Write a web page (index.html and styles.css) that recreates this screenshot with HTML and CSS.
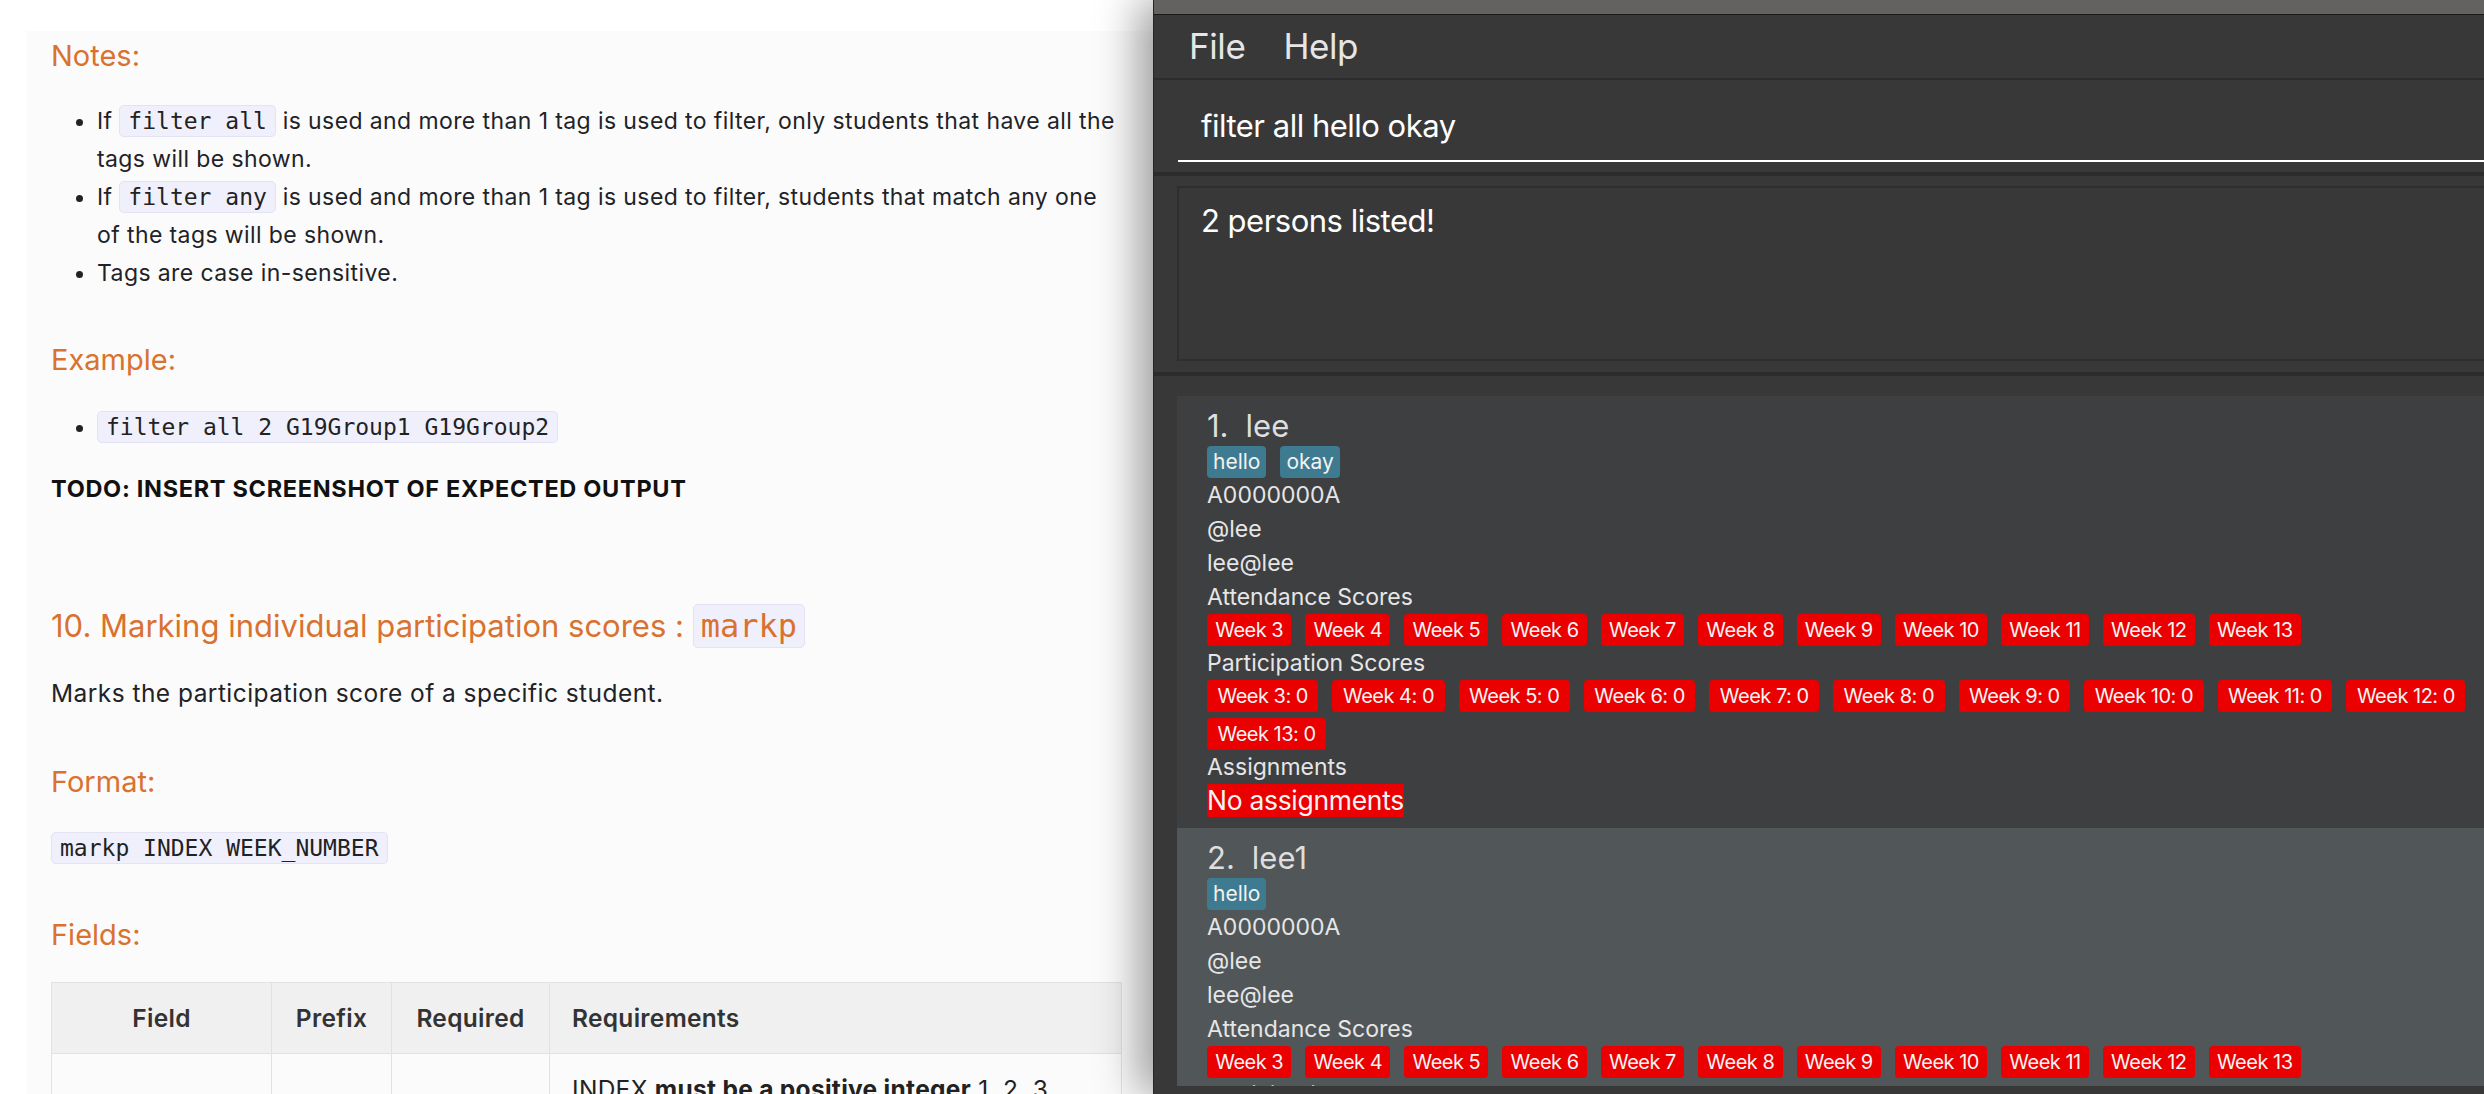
FILE: index.html
```html
<!DOCTYPE html>
<html lang="en">
<head>
<meta charset="utf-8">
<title>Marking participation</title>
<link rel="stylesheet" href="styles.css">
</head>
<body>
<div class="screen">
  <main class="doc">
    <div class="doc-inner">
      <h4 class="h-notes">Notes:</h4>
      <ul class="list-notes">
        <li>If <code>filter all</code> is used and more than 1 tag is used to filter, only students that have all the tags will be shown.</li>
        <li>If <code>filter any</code> is used and more than 1 tag is used to filter, students that match any one of the tags will be shown.</li>
        <li>Tags are case in-sensitive.</li>
      </ul>
      <h4 class="h-example">Example:</h4>
      <ul class="list-example">
        <li><code>filter all 2 G19Group1 G19Group2</code></li>
      </ul>
      <p class="todo"><strong>TODO: INSERT SCREENSHOT OF EXPECTED OUTPUT</strong></p>
      <h3 class="h-section">10. Marking individual participation scores : <code>markp</code></h3>
      <p class="desc">Marks the participation score of a specific student.</p>
      <h4 class="h-format">Format:</h4>
      <p class="format"><code>markp INDEX WEEK_NUMBER</code></p>
      <h4 class="h-fields">Fields:</h4>
      <table class="fields">
        <thead>
          <tr><th class="c-field">Field</th><th class="c-prefix">Prefix</th><th class="c-req">Required</th><th class="c-reqs">Requirements</th></tr>
        </thead>
        <tbody>
          <tr>
            <td class="c-field">INDEX</td>
            <td class="c-prefix">-</td>
            <td class="c-req">Yes</td>
            <td class="c-reqs">INDEX <strong>must be a positive integer</strong> 1, 2, 3, …<br>INDEX must be within the range of the displayed list.<br>WEEK_NUMBER must be between 3 and 13.</td>
          </tr>
        </tbody>
      </table>
    </div>
  </main>

  <section class="app">
    <div class="titlebar"></div>
    <nav class="menubar">
      <span class="menu-item">File</span>
      <span class="menu-item">Help</span>
    </nav>
    <div class="command">
      <div class="command-field">filter all hello okay</div>
    </div>
    <div class="result">
      <div class="result-box">2 persons listed!</div>
    </div>
    <div class="person-list">
      <article class="card card-1">
        <div class="name"><span class="idx">1.</span><span>lee</span></div>
        <div class="tags"><span class="tag">hello</span><span class="tag">okay</span></div>
        <div class="line">A0000000A</div>
        <div class="line">@lee</div>
        <div class="line">lee@lee</div>
        <div class="line">Attendance Scores</div>
        <div class="chips">
          <span class="chip">Week 3</span><span class="chip">Week 4</span><span class="chip">Week 5</span><span class="chip">Week 6</span><span class="chip">Week 7</span><span class="chip">Week 8</span><span class="chip">Week 9</span><span class="chip">Week 10</span><span class="chip">Week 11</span><span class="chip">Week 12</span><span class="chip">Week 13</span>
        </div>
        <div class="line">Participation Scores</div>
        <div class="chips">
          <span class="chip score">Week 3: 0</span><span class="chip score">Week 4: 0</span><span class="chip score">Week 5: 0</span><span class="chip score">Week 6: 0</span><span class="chip score">Week 7: 0</span><span class="chip score">Week 8: 0</span><span class="chip score">Week 9: 0</span><span class="chip score">Week 10: 0</span><span class="chip score">Week 11: 0</span><span class="chip score">Week 12: 0</span><span class="chip score">Week 13: 0</span>
        </div>
        <div class="line">Assignments</div>
        <div class="noassign-row"><span class="noassign">No assignments</span></div>
      </article>
      <article class="card card-2">
        <div class="name"><span class="idx">2.</span><span>lee1</span></div>
        <div class="tags"><span class="tag">hello</span></div>
        <div class="line">A0000000A</div>
        <div class="line">@lee</div>
        <div class="line">lee@lee</div>
        <div class="line">Attendance Scores</div>
        <div class="chips">
          <span class="chip">Week 3</span><span class="chip">Week 4</span><span class="chip">Week 5</span><span class="chip">Week 6</span><span class="chip">Week 7</span><span class="chip">Week 8</span><span class="chip">Week 9</span><span class="chip">Week 10</span><span class="chip">Week 11</span><span class="chip">Week 12</span><span class="chip">Week 13</span>
        </div>
        <div class="line">Participation Scores</div>
        <div class="chips">
          <span class="chip score">Week 3: 0</span><span class="chip score">Week 4: 0</span><span class="chip score">Week 5: 0</span>
        </div>
      </article>
    </div>
  </section>
</div>
</body>
</html>
```

FILE: styles.css
```css
html, body {
  margin: 0;
  padding: 0;
  width: 2484px;
  height: 1094px;
  overflow: hidden;
  background: #ffffff;
}

.screen {
  display: flex;
  width: 2484px;
  height: 1094px;
  overflow: hidden;
}

/* ---------- documentation page ---------- */
.doc {
  flex: none;
  width: 1153px;
  height: 1094px;
  overflow: hidden;
  background: #ffffff;
  font-family: "Inter", "Noto Sans", sans-serif;
  color: #1f2328;
}

.doc-inner {
  margin: 31px 0 0 27px;
  padding: 7px 40px 0 24px;
  width: 1070px;
  height: 1100px;
  background: #fbfbfb;
}

.doc h4 {
  margin: 0;
  font-size: 29px;
  line-height: 35px;
  font-weight: 400;
  color: #d9722f;
}

.doc h3 {
  margin: 96px 0 0;
  font-size: 31px;
  line-height: 44px;
  font-weight: 400;
  color: #d9722f;
}

.doc ul {
  margin: 0;
  padding-left: 46px;
  font-size: 23px;
  line-height: 38px;
  letter-spacing: 0.4px;
}

.doc p {
  margin: 0;
  font-size: 23px;
  line-height: 38px;
  letter-spacing: 0.35px;
}

.list-notes { margin-top: 29px !important; }
.h-example { margin-top: 50px !important; }
.list-example { margin-top: 31px !important; }
.todo { margin-top: 24px !important; }
.todo strong {
  font-weight: 700;
  font-size: 23.5px;
  letter-spacing: 0.7px;
  color: #111;
}
.desc {
  margin-top: 26px !important;
  font-size: 24.5px !important;
  letter-spacing: 0.45px !important;
}
.h-format { margin-top: 52px !important; }
.format { margin-top: 30px !important; }
.h-fields { margin-top: 50px !important; }

.doc code {
  font-family: "DejaVu Sans Mono", "Liberation Mono", monospace;
  font-size: 23px;
  letter-spacing: 0;
  padding: 2px 8px;
  background: #f0f0fd;
  border: 1px solid #e3e3f3;
  border-radius: 5px;
  color: #222;
}

.doc h3 code {
  font-size: 32px;
  padding: 2px 7px;
  color: #d9722f;
}

.fields {
  margin-top: 30px;
  width: 1071px;
  border-collapse: collapse;
  font-size: 24.5px;
  line-height: 38px;
  letter-spacing: 0.3px;
}

.fields th,
.fields td {
  border: 1px solid #e2e2e2;
  padding: 16px 22px;
  vertical-align: middle;
}

.fields th {
  background: #f0f0f0;
  font-weight: 600;
  color: #333;
}

.c-field { width: 175px; text-align: center; }
.c-prefix { width: 75px; text-align: center; }
.c-req { width: 113px; text-align: center; }
.c-reqs { text-align: left; }

.fields td.c-reqs { font-weight: 400; color: #222; }
.fields td strong { font-weight: 700; }

/* ---------- JavaFX app window ---------- */
.app {
  flex: none;
  position: relative;
  z-index: 1;
  width: 1420px;
  height: 1094px;
  background: #383838;
  border-left: 1px solid #262626;
  box-shadow: -14px 0 40px rgba(0, 0, 0, 0.38);
  font-family: "Inter", "Noto Sans", sans-serif;
  color: #ececec;
  display: flex;
  flex-direction: column;
}

.titlebar {
  flex: none;
  height: 14px;
  background: #636260;
  border-bottom: 1px solid #1b1b1b;
}

.menubar {
  flex: none;
  height: 63px;
  display: flex;
  align-items: center;
  gap: 38px;
  padding-left: 35px;
  font-size: 35px;
  line-height: 63px;
  letter-spacing: -0.4px;
  color: #e6e6e6;
  border-bottom: 2px solid #2c2c2c;
}

.command {
  flex: none;
  height: 92px;
  padding-left: 24px;
  border-bottom: 4px solid #2c2c2c;
}

.command-field {
  height: 54px;
  padding: 26px 0 0 23px;
  border-bottom: 2px solid #ffffff;
  font-size: 31px;
  line-height: 40px;
  letter-spacing: -0.5px;
  color: #ffffff;
}

.result {
  flex: none;
  height: 200px;
  padding: 10px 0 11px 23px;
  box-sizing: border-box;
  border-bottom: 4px solid #2c2c2c;
}

.result-box {
  height: 100%;
  box-sizing: border-box;
  border: 2px solid #2e2e2e;
  border-right: none;
  padding: 13px 0 0 22px;
  font-size: 31px;
  line-height: 40px;
  letter-spacing: -0.5px;
  color: #ffffff;
}

.person-list {
  flex: none;
  height: 710px;
  overflow: hidden;
  padding: 20px 13px 0 23px;
  box-sizing: border-box;
}

.card {
  padding: 10px 30px 11px 30px;
}

.card-1 { background: #3d3f41; }
.card-2 { background: #515659; }

.name {
  font-size: 31px;
  line-height: 40px;
  color: #dedede;
  display: flex;
  gap: 17px;
}

.tags {
  display: flex;
  gap: 14px;
  height: 32px;
}

.tag {
  height: 32px;
  line-height: 32px;
  padding: 0 6px;
  font-size: 21px;
  background: #3e7b91;
  color: #f2f2f2;
  border-radius: 4px;
}

.line {
  font-size: 23px;
  line-height: 34px;
  color: #e6e6e6;
}

.chips {
  display: flex;
  flex-wrap: wrap;
  gap: 6px 14px;
}

.chip {
  height: 32px;
  line-height: 32px;
  padding: 0 8.2px;
  font-size: 20px;
  letter-spacing: -0.5px;
  background: #ea0000;
  color: #f4f4f4;
  border-radius: 4px;
}

.chip.score {
  padding: 0 10.5px;
}

.noassign-row {
  height: 33px;
}

.noassign {
  display: inline-block;
  font-size: 26.5px;
  line-height: 33px;
  letter-spacing: -0.3px;
  background: #ea0000;
  color: #f4f4f4;
}
```
